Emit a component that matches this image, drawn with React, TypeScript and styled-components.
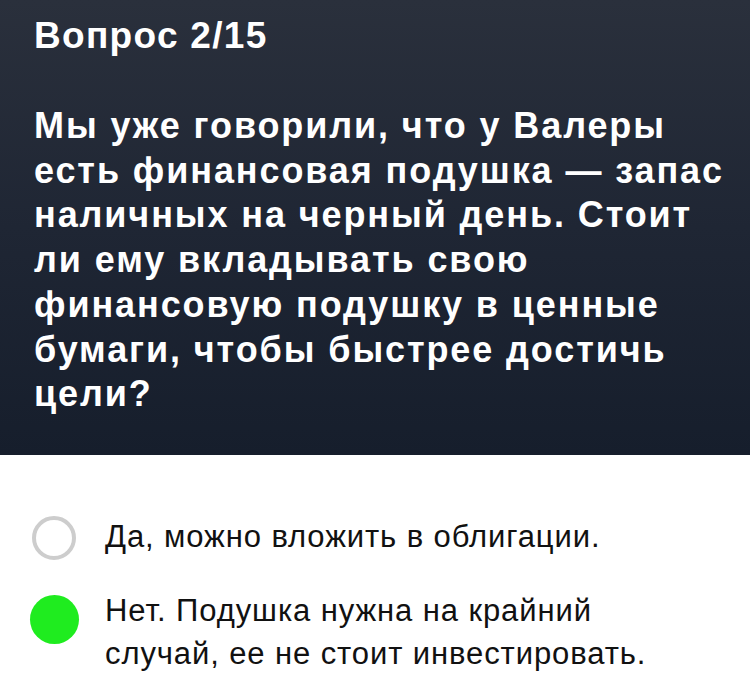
import styled, { createGlobalStyle } from 'styled-components';

const GlobalStyle = createGlobalStyle`
  html, body {
    margin: 0;
    padding: 0;
    background: #ffffff;
  }
  body {
    font-family: "Liberation Sans", Arial, sans-serif;
    -webkit-font-smoothing: antialiased;
  }
`;

const Page = styled.div`
  width: 750px;
  min-height: 692px;
  display: flex;
  flex-direction: column;
  background: #ffffff;
`;

const Header = styled.header`
  height: 455px;
  box-sizing: border-box;
  padding: 14px 10px 0 34px;
  background: linear-gradient(180deg, #2a303c 0%, #1f2634 50%, #161e2c 100%);
  color: #ffffff;
`;

const Counter = styled.div`
  font-size: 37px;
  font-weight: 700;
  line-height: 44px;
  letter-spacing: 1.3px;
`;

const Question = styled.h1`
  margin: 46px 0 0 0;
  font-size: 36px;
  font-weight: 700;
  line-height: 44.7px;
  letter-spacing: 1.9px;
  white-space: nowrap;
`;

const Options = styled.ul`
  list-style: none;
  margin: 0;
  padding: 60px 0 0 29px;
  display: flex;
  flex-direction: column;
  gap: 29px;
`;

const Option = styled.li`
  display: flex;
  align-items: flex-start;
  gap: 26px;
`;

const RadioSlot = styled.span<{ $offset: number }>`
  flex: none;
  width: 50px;
  display: flex;
  justify-content: center;
  padding-top: ${({ $offset }) => $offset}px;
`;

const Radio = styled.span<{ $checked?: boolean }>`
  box-sizing: border-box;
  width: ${({ $checked }) => ($checked ? '49px' : '44px')};
  height: ${({ $checked }) => ($checked ? '49px' : '44px')};
  border-radius: 50%;
  border: ${({ $checked }) => ($checked ? 'none' : '4px solid #cdcdcd')};
  background: ${({ $checked }) => ($checked ? '#1fec1f' : '#ffffff')};
`;

const Label = styled.span`
  font-size: 31px;
  font-weight: 400;
  line-height: 43px;
  letter-spacing: 0.9px;
  color: #111111;
  white-space: nowrap;
`;

const App = () => {
  return (
    <Page>
      <GlobalStyle />
      <Header>
        <Counter>Вопрос 2/15</Counter>
        <Question>
          Мы уже говорили, что у Валеры
          <br />
          есть финансовая подушка — запас
          <br />
          наличных на черный день. Стоит
          <br />
          ли ему вкладывать свою
          <br />
          финансовую подушку в ценные
          <br />
          бумаги, чтобы быстрее достичь
          <br />
          цели?
        </Question>
      </Header>
      <Options>
        <Option>
          <RadioSlot $offset={1}>
            <Radio />
          </RadioSlot>
          <Label>Да, можно вложить в облигации.</Label>
        </Option>
        <Option>
          <RadioSlot $offset={6}>
            <Radio $checked />
          </RadioSlot>
          <Label>
            Нет. Подушка нужна на крайний
            <br />
            случай, ее не стоит инвестировать.
          </Label>
        </Option>
      </Options>
    </Page>
  );
};

export default App;
